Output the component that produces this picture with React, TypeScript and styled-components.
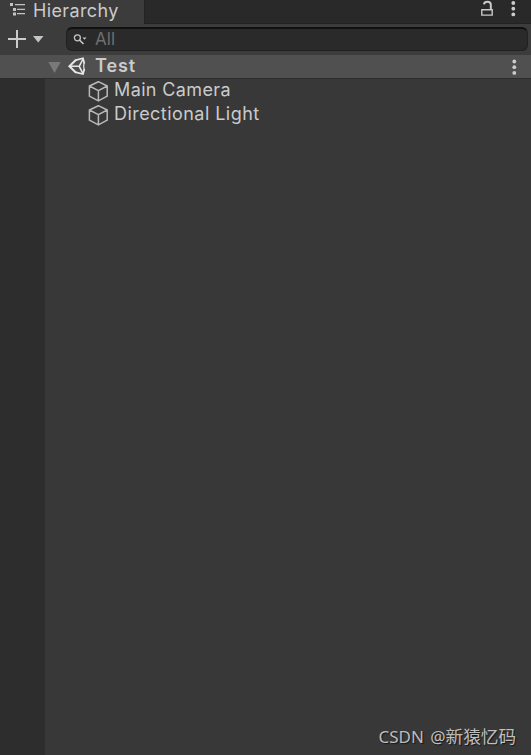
import React from "react";
import styled, { createGlobalStyle } from "styled-components";

const GlobalStyle = createGlobalStyle`
  * { box-sizing: border-box; }
  body { margin: 0; background: #383838; overflow: hidden; }
`;

const Panel = styled.main`
  position: relative;
  display: flex;
  flex-direction: column;
  width: 100%;
  height: 100vh;
  background: #383838;
  color: #cbcbcb;
  font-family: Inter, "Liberation Sans", sans-serif;
  font-size: 18px;
`;

const TabBar = styled.header`
  display: flex;
  justify-content: space-between;
  flex: 0 0 24px;
  background: #3c3c3c;
`;

const Tab = styled.div`
  display: flex;
  width: 144px;
  padding-left: 9px;
  gap: 7px;
`;

const TabActions = styled.div`
  flex: 1;
  display: flex;
  justify-content: flex-end;
  gap: 17px;
  padding-right: 15px;
  background: #292929;
  border-left: 1px solid #232323;
  border-bottom: 1px solid #222;
`;

const Label = styled.span<{ $spacing: number; $bold?: boolean }>`
  display: block;
  line-height: 22px;
  letter-spacing: ${({ $spacing }) => $spacing}px;
  font-weight: ${({ $bold }) => ($bold ? 600 : 400)};
  white-space: nowrap;
`;

const Icon = styled.svg`
  display: block;
  flex: none;
  overflow: visible;
`;

const Toolbar = styled.div`
  display: flex;
  flex: 0 0 31px;
  padding: 3px 3px 4px 8px;
  background: #3c3c3c;
`;

const AddButton = styled.div`
  display: flex;
  width: 58px;
  padding-top: 3px;
  gap: 7px;
`;

const SearchField = styled.div`
  display: flex;
  flex: 1;
  height: 24px;
  padding-left: 6px;
  gap: 8px;
  background: #2a2a2a;
  border: 1px solid #212121;
  border-top: 2px solid #101010;
  border-radius: 6px;
  color: #6f6f6f;
  font-size: 17px;
`;

const Placeholder = styled(Label)`
  line-height: 21px;
`;

const SceneRow = styled.div`
  display: flex;
  flex: 0 0 24px;
  padding: 0 12px 0 48px;
  background: #505050;
  border-bottom: 1px solid #2c2c2c;
`;

const SceneIconSlot = styled.div`
  padding-left: 7px;
`;

const SceneName = styled.div`
  flex: 1;
  padding-left: 9px;
`;

const SceneMenu = styled.div`
  width: 8px;
`;

const Body = styled.div`
  display: flex;
  flex: 1;
`;

const Gutter = styled.div`
  width: 45px;
  background: #2d2d2d;
`;

const ObjectList = styled.div`
  flex: 1;
`;

const ObjectRow = styled.div`
  display: flex;
  height: 24px;
  padding-left: 43px;
  gap: 5px;
`;

const Watermark = styled.div`
  position: absolute;
  right: 15px;
  bottom: 6px;
  color: #bebebe;
  font: 17px/24px "Noto Sans", "Noto Sans CJK SC", sans-serif;
  word-spacing: 2px;
  text-shadow: 1px 1px 1px #171717;
  white-space: nowrap;
`;

const AuthorName = styled.span`
  font-size: 17.6px;
`;

const TreeIcon = () => (
  <Icon width="17" height="20" viewBox="0 0 17 20" fill="#c4c4c4">
    <path d="M1 3h3v3H1zM4 8h3v3H4zM4 12.5h3v3H4zM6 4h10v1.3H6zM8 8.8h8v1.3H8zM8 13h8v1.3H8z" />
  </Icon>
);

const LockIcon = () => (
  <Icon width="13" height="18" viewBox="0 0 13 18" fill="none" stroke="#c9c9c9">
    <path d="M1.8 9.7h10.4v5.4H1.8z" strokeWidth="1.4" />
    <path d="M4 4.3C4.5 1 10.6 1 10.8 4.5V9" strokeWidth="2" />
  </Icon>
);

const KebabIcon = ({ top }: { top: number }) => (
  <Icon width="6" height="20" viewBox="0 0 6 20" fill="#cccccc">
    {[0, 1, 2].map((i) => (
      <circle key={i} cx="3.3" cy={top + i * 5.7} r="1.9" />
    ))}
  </Icon>
);

const PlusIcon = () => (
  <Icon width="18" height="18" viewBox="0 0 18 18">
    <path d="M9 0v18M0 9h18" stroke="#cccccc" strokeWidth="2" />
  </Icon>
);

const CaretIcon = () => (
  <Icon width="11" height="18" viewBox="0 0 11 18">
    <path d="M0 6h10.5L5.2 12.4z" fill="#c4c4c4" />
  </Icon>
);

const SearchIcon = () => (
  <Icon width="14" height="20" viewBox="0 0 14 20">
    <circle cx="4.4" cy="8.8" r="3" fill="none" stroke="#c4c4c4" strokeWidth="1.3" />
    <path d="M6.5 11l4 4" stroke="#c4c4c4" strokeWidth="1.7" />
    <path d="M9.5 8.5h4l-2 2.2z" fill="#c4c4c4" />
  </Icon>
);

const FoldoutIcon = () => (
  <Icon width="13" height="22" viewBox="0 0 13 22">
    <path d="M0.3 7h12.4L6.5 18z" fill="#797979" />
  </Icon>
);

const UnityIcon = () => (
  <Icon width="18" height="22" viewBox="0 0 18 22" fill="none" stroke="#e8e8e8">
    <path d="M7.8 5L1.4 11.3 7.8 17.5" strokeWidth="2" />
    <path d="M7 5.4L15 3.3 16.4 8.5M16.4 14L15 19 7 17.2" strokeWidth="1.7" />
    <path d="M2 11.3H11.2M11.2 11.3L15 4M11.2 11.3L15 18.7" strokeWidth="1.6" />
    <path d="M16.2 7.5Q15 11.3 16.2 15" strokeWidth="1.2" />
  </Icon>
);

const CubeIcon = () => (
  <Icon width="21" height="24" viewBox="0 0 21 24" fill="none" stroke="#b9b9b9" strokeWidth="1.5">
    <path d="M10.4 2.7L19.2 7V17.2L10.4 21.9 1.4 17.2V7zM1.4 7L10.4 11.7 19.2 7M10.4 11.7V21.9" strokeLinejoin="round" />
  </Icon>
);

const objects = [
  { name: "Main Camera", spacing: 0.38 },
  { name: "Directional Light", spacing: 0.45 },
];

export default function App() {
  return (
    <>
      <GlobalStyle />
      <Panel>
        <TabBar>
          <Tab>
            <TreeIcon />
            <Label $spacing={0.38}>Hierarchy</Label>
          </Tab>
          <TabActions>
            <LockIcon />
            <KebabIcon top={3} />
          </TabActions>
        </TabBar>
        <Toolbar>
          <AddButton>
            <PlusIcon />
            <CaretIcon />
          </AddButton>
          <SearchField>
            <SearchIcon />
            <Placeholder $spacing={0.1}>All</Placeholder>
          </SearchField>
        </Toolbar>
        <SceneRow>
          <FoldoutIcon />
          <SceneIconSlot>
            <UnityIcon />
          </SceneIconSlot>
          <SceneName>
            <Label $spacing={0.9} $bold>Test</Label>
          </SceneName>
          <SceneMenu>
            <KebabIcon top={6.5} />
          </SceneMenu>
        </SceneRow>
        <Body>
          <Gutter />
          <ObjectList>
            {objects.map(({ name, spacing }) => (
              <ObjectRow key={name}>
                <CubeIcon />
                <Label $spacing={spacing}>{name}</Label>
              </ObjectRow>
            ))}
          </ObjectList>
        </Body>
        <Watermark>
          CSDN @<AuthorName>新猿忆码</AuthorName>
        </Watermark>
      </Panel>
    </>
  );
}
